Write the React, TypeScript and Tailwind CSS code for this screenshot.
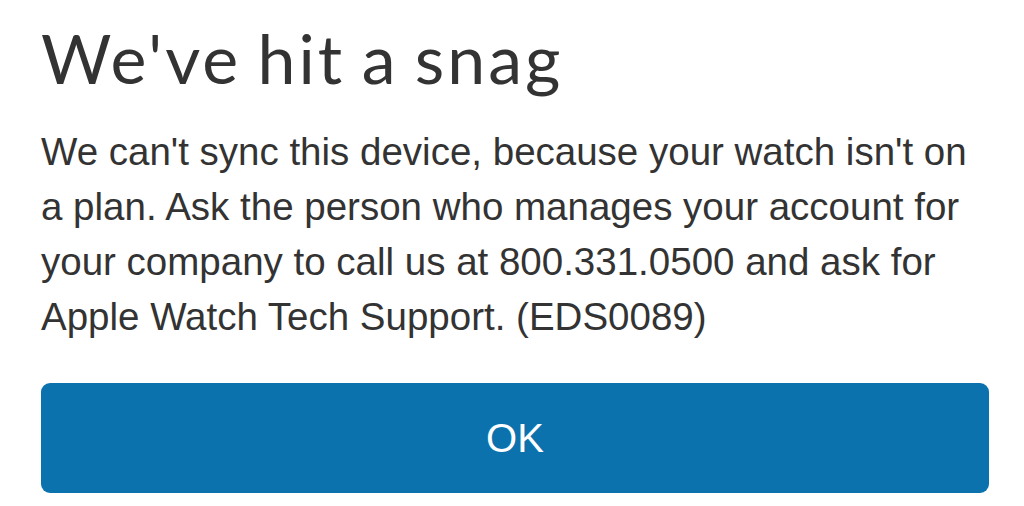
export default function App() {
  return (
    <div className="w-[1024px] h-[506px] bg-white overflow-hidden pl-[41px] pr-[35px] pt-[12px]">
      <h1 className="text-[68px] leading-[92px] text-[#333333] tracking-[3px] [word-spacing:-4px] font-['Lato',sans-serif] font-normal">
        We've hit a snag
      </h1>
      <p className="mt-[20px] text-[38.5px] leading-[55px] text-[#333333] font-['Liberation_Sans',Arial,sans-serif]">
        We can't sync this device, because your watch isn't on a plan. Ask the person who manages your account for
        your company to call us at 800.331.0500 and ask for Apple Watch Tech Support. (EDS0089)
      </p>
      <button className="mt-[39px] w-full h-[110px] rounded-[9px] bg-[#0b72ad] text-white text-[40px] font-['Liberation_Sans',Arial,sans-serif]">
        OK
      </button>
    </div>
  );
}
